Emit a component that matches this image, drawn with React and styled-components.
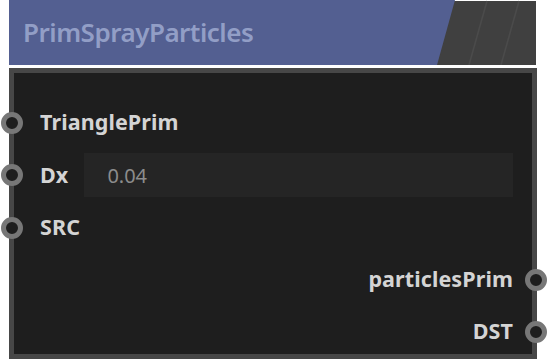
import React from 'react';
import styled, { createGlobalStyle } from 'styled-components';

const Global = createGlobalStyle`
	html, body {
		margin: 0;
		background: #fff;
	}
	body {
		font-family: "Noto Sans", "Open Sans", sans-serif;
	}
`;

const Page = styled.div`
	padding: 0 0 0 9px;
	width: 528px;
`;

const Header = styled.header`
	display: grid;
	height: 65px;
	> * {
		grid-area: 1 / 1;
	}
`;

const HeaderArt = styled.svg`
	display: block;
	width: 528px;
	height: 65px;
`;

const Title = styled.h1`
	margin: 0;
	align-self: center;
	padding-left: 14px;
	font-size: 26px;
	font-weight: 600;
	letter-spacing: -0.5px;
	color: #929ec6;
	line-height: 1;
	padding-bottom: 2px;
`;

const Body = styled.div`
	margin-top: 3px;
	height: 291px;
	box-sizing: border-box;
	background: #1e1e1e;
	border: 5px solid #474747;
	padding: 28px 19px 0 0;
	display: flex;
	flex-direction: column;
	gap: 8.7px;
`;

const Row = styled.div`
	display: flex;
	align-items: center;
	height: 44px;
	justify-content: ${p => (p.$out ? 'flex-end' : 'flex-start')};
	margin-right: ${p => (p.$out ? '-34px' : '0')};
`;

const Socket = styled.span`
	flex: none;
	width: 22px;
	height: 22px;
	box-sizing: border-box;
	border-radius: 50%;
	border: 5px solid #777;
	background: #1e1e1e;
	margin: ${p => (p.$out ? '0 0 0 12px' : '0 17px 0 -13px')};
`;

const Label = styled.span`
	font-size: 21.5px;
	font-weight: 700;
	color: #d4d4d4;
	letter-spacing: 0.1px;
	line-height: 1;
	padding-bottom: 2px;
`;

const Field = styled.div`
	flex: 1;
	height: 44px;
	margin-left: 16px;
	background: #252525;
	display: flex;
	align-items: center;
	padding-left: 23px;
	font-size: 20px;
	color: #8c8c8c;
`;

const inputs = ['TrianglePrim', 'Dx', 'SRC'];
const outputs = ['particlesPrim', 'DST'];

export default function App() {
	return (
		<Page>
			<Global />
			<Header>
				<HeaderArt viewBox="0 0 528 65">
					<rect x="0" y="1" width="527" height="64" fill="#404040" />
					<polygon points="0,0 446,0 428,65 0,65" fill="#535f91" />
					<line x1="478" y1="1" x2="460" y2="65" stroke="#4b4b4b" strokeWidth="1.5" />
					<line x1="510" y1="1" x2="492" y2="65" stroke="#4b4b4b" strokeWidth="1.5" />
				</HeaderArt>
				<Title>PrimSprayParticles</Title>
			</Header>
			<Body>
				{inputs.map(name => (
					<Row key={name}>
						<Socket />
						<Label>{name}</Label>
						{name === 'Dx' && <Field>0.04</Field>}
					</Row>
				))}
				{outputs.map(name => (
					<Row key={name} $out>
						<Label>{name}</Label>
						<Socket $out />
					</Row>
				))}
			</Body>
		</Page>
	);
}
